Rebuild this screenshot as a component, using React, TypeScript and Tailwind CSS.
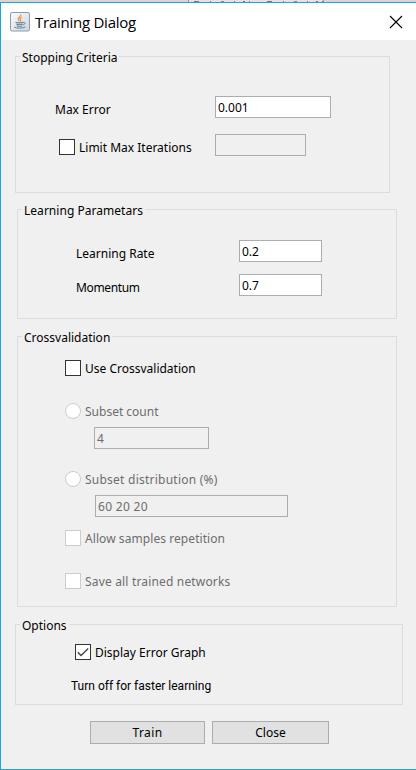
import React from 'react';

type Kids = { children?: React.ReactNode };

function Text({ className = '', children }: Kids & { className?: string }) {
  return <span className={`block h-4 whitespace-nowrap leading-4 ${className}`}>{children}</span>;
}

function Group({ title, className, legendClass = '', children }: Kids & { title: string; className: string; legendClass?: string }) {
  return (
    <section className={`flex flex-col border border-[#dcdcdc] ${className}`}>
      <h2 className={`-mt-2 ml-1 h-4 w-fit whitespace-nowrap bg-[#f0f0f0] px-[2px] leading-[18px] ${legendClass}`}>{title}</h2>
      {children}
    </section>
  );
}

function Field({ className, value = '', disabled = false }: { className: string; value?: string; disabled?: boolean }) {
  return (
    <div className={`h-[22px] border border-[#abadb3] pl-[2px] leading-[21px] whitespace-nowrap ${disabled ? 'bg-[#f0f0f0] text-[#6d6d6d]' : 'bg-white text-black'} ${className}`}>
      {value}
    </div>
  );
}

function Check({ label, disabled = false, checked = false, radio = false, className = '', labelClass = '' }: {
  label: string; disabled?: boolean; checked?: boolean; radio?: boolean; className?: string; labelClass?: string;
}) {
  return (
    <div className={`flex h-4 items-center gap-1 ${disabled ? 'text-[#6d6d6d]' : 'text-black'} ${className}`}>
      <span className={`flex size-4 shrink-0 items-center justify-center border bg-white ${radio ? 'rounded-full' : ''} ${disabled ? 'border-[#cccccc]' : 'border-[#333333]'}`}>
        {checked && (
          <svg width="14" height="14" viewBox="0 0 14 14" fill="none" stroke="#444" strokeWidth="1.4">
            <path d="M1.8 7.2 5 10.6 12.2 3.6" />
          </svg>
        )}
      </span>
      <Text className={`pt-px ${labelClass}`}>{label}</Text>
    </div>
  );
}

function Button({ className, children }: Kids & { className: string }) {
  return (
    <button className={`h-[23px] border border-[#adadad] bg-[#e1e1e1] leading-[21px] ${className}`}>{children}</button>
  );
}

function JavaIcon() {
  return (
    <svg width="20" height="20" viewBox="0 0 20 20" fill="none">
      <defs>
        <linearGradient id="tile" x1="0" y1="0" x2="1" y2="1">
          <stop offset="0" stopColor="#fbfbfb" />
          <stop offset="1" stopColor="#cfd6dc" />
        </linearGradient>
      </defs>
      <rect x="0.5" y="0.5" width="19" height="18.5" rx="1.5" fill="url(#tile)" stroke="#8c9dab" />
      <path d="M10.8 2.500c.8 2-3 2.800-2.600 4.600.2 1 1 1.300 1.200 2.200M12 5.200c-2 .8-2.300 1.700-1.500 2.700.5.7.3 1.100-.3 1.500" stroke="#e8904f" strokeWidth="1.200" />
      <path d="M5.500 10.200c2 .7 6 .7 8 0M6.300 12c1.500.7 5 .7 6.400 0M6.800 13.700c1.400.6 4 .6 5.400 0" stroke="#5d809c" strokeWidth="1.100" />
      <path d="M13.300 10.500c2.300-.6 2.200 1.800-.2 2.500M4.200 15c2 1.500 8.600 1.500 11.200 0" stroke="#5d809c" strokeWidth="1" />
    </svg>
  );
}

function TabLabelEdge() {
  return (
    <>
      <i className="w-[5px] bg-[#777]" />
      <i className="ml-[11px] w-px bg-[#777]" />
      <i className="ml-[10px] w-1 bg-[#888]" />
      <i className="ml-[10px] w-px bg-[#777]" />
      <i className="ml-2 w-[2px] bg-[#777]" />
      <i className="ml-1 w-px bg-[#777]" />
    </>
  );
}

export default function App() {
  return (
    <div className="flex h-[770px] w-[416px] flex-col overflow-hidden bg-[#dcdcdc] font-['Noto_Sans',sans-serif] text-[12px] text-black">
      <div className="flex h-[2px] shrink-0 bg-[#d6d6d6]">
        <div className="ml-[188px] flex h-[2px] w-[136px] overflow-hidden border-x border-[#999] bg-[#e3e3e3] pl-[5px] pt-px">
          <TabLabelEdge />
          <i className="w-[18px]" />
          <TabLabelEdge />
        </div>
      </div>
      <main className="flex h-[768px] flex-col border-y border-l border-[#26a0da] bg-[#f0f0f0]">
        <header className="flex h-[37px] shrink-0 items-center bg-white pl-[9px] pr-[13px]">
          <div><JavaIcon /></div>
          <h1 className="ml-[5px] whitespace-nowrap font-['Open_Sans',sans-serif] text-[15px] leading-5 tracking-[-0.25px]">Training Dialog</h1>
          <svg className="ml-auto" width="14" height="14" viewBox="0 0 14 14" stroke="#000" strokeWidth="1.1"><path d="M1 1 13 13M13 1 1 13" /></svg>
        </header>

        <Group title="Stopping Criteria" className="ml-[14px] mt-4 h-[137px] w-[375px]">
          <div className="mt-[31px] flex items-start">
            <Text className="ml-[39px] mt-[6px] w-40">Max Error</Text>
            <Field className="w-[116px]" value="0.001" />
          </div>
          <div className="mt-4 flex items-start">
            <Check className="ml-[43px] mt-[5px] w-[156px]" label="Limit Max Iterations" />
            <Field className="w-[91px]" disabled />
          </div>
        </Group>

        <Group title="Learning Parametars" className="ml-4 mt-4 h-[110px] w-[380px]" legendClass="tracking-[0.03px]">
          <div className="mt-[22px] flex items-start">
            <Text className="ml-[58px] mt-[6px] w-[163px]">Learning Rate</Text>
            <Field className="w-[83px]" value="0.2" />
          </div>
          <div className="mt-3 flex items-start">
            <Text className="ml-[58px] mt-[6px] w-[163px] tracking-[-0.35px]">Momentum</Text>
            <Field className="w-[83px]" value="0.7" />
          </div>
        </Group>

        <Group title="Crossvalidation" className="ml-4 mt-[17px] h-[271px] w-[380px]">
          <Check className="ml-[47px] mt-[15px]" label="Use Crossvalidation" />
          <Check className="ml-[47px] mt-[27px]" label="Subset count" radio disabled />
          <Field className="ml-[76px] mt-2 w-[115px]" value="4" disabled />
          <Check className="ml-[47px] mt-[22px]" label="Subset distribution (%)" labelClass="tracking-[0.24px]" radio disabled />
          <Field className="ml-[77px] mt-2 w-[193px] tracking-[0.3px]" value="60 20 20" disabled />
          <Check className="ml-[47px] mt-[13px]" label="Allow samples repetition" labelClass="tracking-[0.07px]" disabled />
          <Check className="ml-[47px] mt-[27px]" label="Save all trained networks" labelClass="tracking-[0.17px]" disabled />
        </Group>

        <Group title="Options" className="ml-[14px] mt-[17px] h-[81px] w-[388px]">
          <Check className="ml-[59px] mt-[11px]" label="Display Error Graph" checked />
          <Text className="ml-[55px] mt-[18px] font-['Roboto',sans-serif]">Turn off for faster learning</Text>
        </Group>

        <div className="ml-[89px] mt-4 flex gap-[7px]">
          <Button className="w-[115px] tracking-[0.4px]">Train</Button>
          <Button className="w-[117px]">Close</Button>
        </div>
      </main>
    </div>
  );
}
